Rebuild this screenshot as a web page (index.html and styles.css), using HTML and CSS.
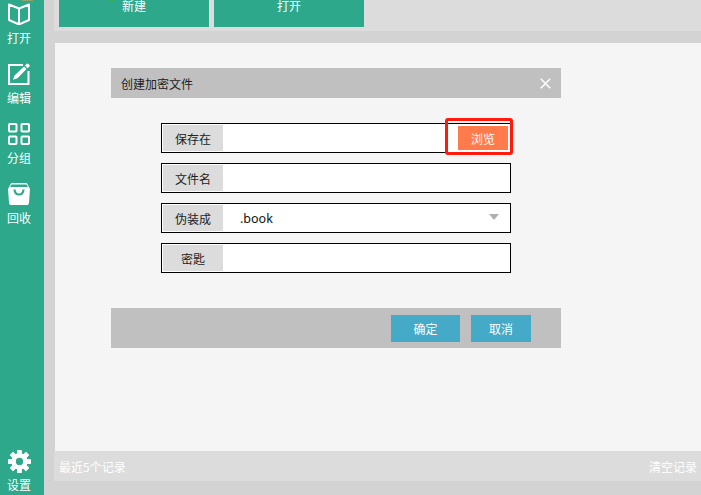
FILE: index.html
```html
<!DOCTYPE html>
<html lang="zh">
<head>
<meta charset="utf-8">
<title>创建加密文件</title>
<link rel="stylesheet" href="styles.css">
</head>
<body>
<div class="app">
  <nav class="sidebar">
    <span class="speck speck-nav"></span>
    <div class="nav-item">
      <svg class="nav-icon" viewBox="0 0 22 22"><path d="M1 1.500 L11 5.500 L21 1.500 V17 L11 21.500 L1 17 Z M11 5.500 V21" fill="none" stroke="#fff" stroke-width="2" stroke-linejoin="round"/></svg>
      <span>打开</span>
    </div>
    <div class="nav-item">
      <svg class="nav-icon" viewBox="0 0 22 22"><path d="M15 2 H1 V21 H20.500 V8" fill="none" stroke="#fff" stroke-width="2"/><path d="M5 16.800 L6.500 12.500 L16 3.500 L18.500 6 L9.500 15.200 Z M17 2.500 L18.800 .8 Q19.500 .3 20.300 .9 L21.500 2.100 Q22 2.900 21.500 3.600 L19.500 5.200 Z" fill="#fff"/></svg>
      <span>编辑</span>
    </div>
    <div class="nav-item">
      <svg class="nav-icon" viewBox="0 0 22 22"><g fill="none" stroke="#fff" stroke-width="2"><rect x="1" y="1" width="7.500" height="7.500" rx=".8"/><rect x="13.500" y="1" width="7.500" height="7.500" rx=".8"/><rect x="1" y="13.500" width="7.500" height="7.500" rx=".8"/><rect x="13.500" y="13.500" width="7.500" height="7.500" rx=".8"/></g></svg>
      <span>分组</span>
    </div>
    <div class="nav-item">
      <svg class="nav-icon" viewBox="0 0 22 22"><path d="M4 0 H18 Q19 0 19.400 1 L22 6 L21 19.500 Q20.800 22.500 18 22.500 H4 Q1.200 22.500 1 19.500 L0 6 L2.600 1 Q3 0 4 0 Z" fill="#fff"/><path d="M3.500 1.500 H18.500 L20 4 H2 Z" fill="#2da88a"/><path d="M6.500 6.500 Q6.800 11.500 11 11.500 Q15.200 11.500 15.500 6.500" fill="none" stroke="#2da88a" stroke-width="2.200"/></svg>
      <span>回收</span>
    </div>
    <div class="nav-item nav-bottom">
      <svg class="nav-icon" viewBox="0 0 24 24"><g fill="#fff"><rect x="9.500" y="0" width="5" height="24" rx=".5"/><rect x="9.500" y="0" width="5" height="24" rx=".5" transform="rotate(45 12 12)"/><rect x="9.500" y="0" width="5" height="24" rx=".5" transform="rotate(90 12 12)"/><rect x="9.500" y="0" width="5" height="24" rx=".5" transform="rotate(135 12 12)"/></g><circle cx="12" cy="12" r="6" fill="none" stroke="#fff" stroke-width="5"/><circle cx="12" cy="12" r="3.800" fill="#2da88a"/></svg>
      <span>设置</span>
    </div>
  </nav>
  <div class="content">
    <div class="toolbar">
      <button class="tool-btn tool-new" type="button">新建<span class="speck speck-tool"></span></button>
      <button class="tool-btn" type="button">打开</button>
    </div>
    <main class="panel">
      <section class="dialog">
        <header class="dialog-head">
          <span>创建加密文件</span>
          <svg class="close" viewBox="0 0 11 11"><path d="M.8 .8 L10.200 10.200 M10.200 .8 L.8 10.200" stroke="#fff" stroke-width="1.500"/></svg>
        </header>
        <div class="form">
          <div class="row">
            <span class="label">保存在</span>
            <span class="value"></span>
            <button class="browse" type="button">浏览</button>
            <span class="highlight"></span>
          </div>
          <div class="row">
            <span class="label">文件名</span>
            <span class="value"></span>
          </div>
          <div class="row">
            <span class="label">伪装成</span>
            <span class="value value-text">.book</span>
            <span class="arrow"></span>
          </div>
          <div class="row">
            <span class="label">密匙</span>
            <span class="value"></span>
          </div>
        </div>
        <footer class="dialog-foot">
          <button class="action action-ok" type="button">确定</button>
          <button class="action action-cancel" type="button">取消</button>
        </footer>
      </section>
    </main>
    <div class="records">
      <span>最近5个记录</span>
      <span class="clear">清空记录</span>
    </div>
  </div>
</div>
</body>
</html>
```
FILE: styles.css
```css
* { box-sizing: border-box; }
html, body { margin: 0; height: 100%; overflow: hidden; }
body {
  background: #d3d3d3;
  font-family: "Noto Sans CJK SC", "Noto Sans", sans-serif;
  font-size: 12px;
}
button { font: inherit; border: 0; padding: 0; }
.app { display: flex; width: 701px; height: 495px; }
.sidebar {
  position: relative;
  width: 44px;
  background: #2da88a;
  color: #fff;
  display: flex;
  flex-direction: column;
  align-items: center;
  padding: 3px 6px 0 0;
}
.nav-item {
  height: 60px;
  display: flex;
  flex-direction: column;
  align-items: center;
  line-height: 17px;
  flex: none;
}
.nav-icon { width: 22px; height: 22px; display: block; margin-bottom: 4px; }
.nav-bottom { margin-top: auto; height: 45px; }
.nav-bottom .nav-icon { width: 23px; height: 23px; margin: 0 0 3px 1px; }
.speck { position: absolute; top: 0; height: 1px; }
.speck-nav { left: 22px; width: 11px; background: #8fa06a; }
.speck-tool { left: 50px; width: 5px; background: #3fae4f; }
.content {
  flex: 1;
  padding-left: 10px;
  display: flex;
  flex-direction: column;
}
.toolbar {
  height: 31px;
  background: #dcdcdc;
  padding: 0 5px 4px;
  display: flex;
  gap: 5px;
  flex: none;
}
.tool-btn {
  width: 150px;
  background: #2da88a;
  color: #fff;
  padding-bottom: 15px;
  line-height: 12px;
  height: 27px;
}
.tool-new { position: relative; }
.panel {
  margin: 12px 0 0 1px;
  height: 408px;
  background: #f5f5f5;
  padding: 25px 0 0 56px;
  flex: none;
}
.dialog { width: 450px; }
.dialog-head {
  height: 30px;
  background: #c0c0c0;
  color: #222;
  display: flex;
  align-items: center;
  justify-content: space-between;
  padding: 0 10px;
}
.close { width: 11px; height: 11px; }
.form {
  padding: 25px 50px 35px;
  display: flex;
  flex-direction: column;
  gap: 10px;
}
.row {
  position: relative;
  height: 30px;
  border: 1px solid #000;
  background: #fff;
  padding: 1px;
  display: flex;
  align-items: stretch;
}
.label {
  width: 60px;
  background: #dcdcdc;
  color: #222;
  display: flex;
  align-items: center;
  justify-content: center;
}
.value { flex: 1; }
.value-text {
  padding-left: 17px;
  display: flex;
  align-items: center;
  color: #111;
  font-family: "Noto Sans", sans-serif;
  font-size: 12.5px;
}
.browse {
  width: 50px;
  margin: 1px 1px 1px 0;
  background: #ff7b4b;
  color: #fff;
}
.highlight {
  position: absolute;
  left: 283px;
  top: -6px;
  width: 68px;
  height: 37px;
  border: 3px solid #ff1a0d;
  border-radius: 3px;
}
.arrow {
  position: absolute;
  right: 11px;
  top: 10px;
  border-style: solid;
  border-width: 6px 5px 0;
  border-color: #b0b0b0 transparent transparent;
}
.dialog-foot {
  height: 40px;
  background: #c0c0c0;
  padding: 7px 30px 6px 0;
  display: flex;
  justify-content: flex-end;
  gap: 11px;
}
.action { background: #45a9c8; color: #fff; }
.action-ok { width: 69px; }
.action-cancel { width: 60px; }
.records {
  height: 30px;
  background: #dcdcdc;
  color: #fff;
  display: flex;
  align-items: center;
  justify-content: space-between;
  padding: 0 4px 0 5px;
  flex: none;
}
```
